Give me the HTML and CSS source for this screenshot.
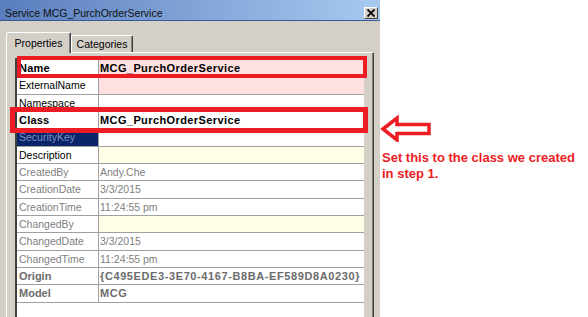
FILE: index.html
```
<!DOCTYPE html>
<html lang="en">
<head>
  <meta charset="UTF-8" />
  <title>Service MCG_PurchOrderService</title>
  <link rel="stylesheet" href="styles.css">
</head>
<body>
  <div class="dialog">
    <div class="titlebar">
      <span class="title">Service MCG_PurchOrderService</span>
      <span class="close-btn">
        <svg width="8" height="8" viewBox="0 0 8 8"><path d="M0.5 0.5 L7.5 7.5 M7.5 0.5 L0.5 7.5" stroke="#000" stroke-width="1.8"/></svg>
      </span>
    </div>
    <div class="tabs">
      <div class="tab active">Properties</div>
      <div class="tab">Categories</div>
    </div>
    <div class="panel">
      <div class="grid">
        <div class="row mark-name">
          <div class="cell label strong">Name</div>
          <div class="cell value strong pink">MCG_PurchOrderService</div>
        </div>
        <div class="row">
          <div class="cell label">ExternalName</div>
          <div class="cell value pink"></div>
        </div>
        <div class="row">
          <div class="cell label">Namespace</div>
          <div class="cell value"></div>
        </div>
        <div class="row mark-class">
          <div class="cell label strong">Class</div>
          <div class="cell value strong">MCG_PurchOrderService</div>
        </div>
        <div class="row">
          <div class="cell label selected">SecurityKey</div>
          <div class="cell value"></div>
        </div>
        <div class="row">
          <div class="cell label">Description</div>
          <div class="cell value yellow"></div>
        </div>
        <div class="row muted">
          <div class="cell label">CreatedBy</div>
          <div class="cell value">Andy.Che</div>
        </div>
        <div class="row muted">
          <div class="cell label">CreationDate</div>
          <div class="cell value">3/3/2015</div>
        </div>
        <div class="row muted">
          <div class="cell label">CreationTime</div>
          <div class="cell value">11:24:55 pm</div>
        </div>
        <div class="row muted">
          <div class="cell label">ChangedBy</div>
          <div class="cell value yellow"></div>
        </div>
        <div class="row muted">
          <div class="cell label">ChangedDate</div>
          <div class="cell value">3/3/2015</div>
        </div>
        <div class="row muted">
          <div class="cell label">ChangedTime</div>
          <div class="cell value">11:24:55 pm</div>
        </div>
        <div class="row system">
          <div class="cell label">Origin</div>
          <div class="cell value wide">{C495EDE3-3E70-4167-B8BA-EF589D8A0230}</div>
        </div>
        <div class="row system">
          <div class="cell label">Model</div>
          <div class="cell value wide">MCG</div>
        </div>
      </div>
    </div>
  </div>
  <div class="note">
    <svg class="note-arrow" width="52" height="28" viewBox="0 0 52 28">
      <path d="M3 15 L17 4 L17 10.5 L49 10.5 L49 19.5 L17 19.5 L17 26 Z" fill="#fff" stroke="#ed1c24" stroke-width="3.5" stroke-linejoin="miter"/>
    </svg>
    <div class="note-text">Set this to the class we created<br>in step 1.</div>
  </div>
</body>
</html>
```
FILE: styles.css
```
:root {
  --face: #d4d0c8;
  --shadow-dark: #404040;
  --shadow: #808080;
  --line: #a0a0a0;
  --pink: #ffe0e0;
  --yellow: #ffffe8;
  --navy: #0a246a;
  --red: #ed1c24;
  --font-ui: "Liberation Sans", Arial, sans-serif;
}
body {
  margin: 0;
  background: #fff;
  font-family: var(--font-ui);
  display: flex;
  height: 317px;
  overflow: hidden;
}
.dialog {
  width: 380px;
  height: 317px;
  background: var(--face);
  display: flex;
  flex-direction: column;
}
.titlebar {
  height: 21px;
  box-sizing: border-box;
  padding: 6px 2px 0 5px;
  border-bottom: 1px solid #3a5a9a;
  background: linear-gradient(to right, #5a7dbd, #a6caf0);
  display: flex;
  align-items: center;
  justify-content: space-between;
}
.title {
  font-size: 10.5px;
  color: #101010;
}
.close-btn {
  width: 14px;
  height: 12px;
  box-sizing: border-box;
  background: var(--face);
  border: 1px solid;
  border-color: #fff var(--shadow-dark) var(--shadow-dark) #fff;
  display: flex;
  align-items: center;
  justify-content: center;
}
.tabs {
  display: flex;
  align-items: flex-end;
  height: 20px;
  margin-top: 11px;
  padding-left: 6px;
}
.tab {
  height: 17px;
  width: 62px;
  box-sizing: border-box;
  border-top: 1px solid #fff;
  border-left: 1px solid #fff;
  border-right: 1px solid var(--shadow-dark);
  box-shadow: inset -1px 0 var(--shadow);
  border-radius: 2px 2px 0 0;
  background: var(--face);
  font-size: 10.5px;
  display: flex;
  align-items: center;
  justify-content: center;
}
.tab.active {
  position: relative;
  z-index: 1;
  width: 65px;
  height: 21px;
  margin-bottom: -1px;
  padding-bottom: 1px;
}
.panel {
  flex: 1;
  width: 368px;
  margin-left: 6px;
  box-sizing: border-box;
  border-top: 1px solid #fff;
  border-left: 1px solid #fff;
  border-right: 1px solid var(--shadow-dark);
  box-shadow: inset -1px 0 var(--shadow);
  padding: 5px 9px 0 8px;
  display: flex;
  flex-direction: column;
}
.grid {
  flex: 1;
  background: #fff;
  border-top: 2px solid var(--shadow-dark);
  border-left: 2px solid var(--shadow-dark);
}
.row {
  position: relative;
  display: grid;
  grid-template-columns: 82px 1fr;
  height: 17.33px;
  box-sizing: border-box;
  border-bottom: 1px solid var(--line);
  font-size: 10.5px;
  color: #000;
}
.cell {
  display: flex;
  align-items: center;
  white-space: nowrap;
  overflow: hidden;
}
.label {
  padding-left: 2px;
  border-right: 1px solid var(--line);
}
.value {
  padding-left: 1px;
}
.strong {
  font-size: 11px;
  font-weight: bold;
  letter-spacing: 0.4px;
}
.label.strong {
  letter-spacing: 0.2px;
}
.pink {
  background: var(--pink);
}
.yellow {
  background: var(--yellow);
}
.selected {
  background: var(--navy);
  color: #8090c0;
}
.muted {
  color: var(--shadow);
}
.system {
  color: #6c6c6c;
  font-size: 11px;
  font-weight: bold;
}
.wide {
  letter-spacing: 0.6px;
}
.mark-name::after,
.mark-class::after {
  content: "";
  position: absolute;
  z-index: 2;
  border: 4px solid var(--red);
  pointer-events: none;
}
.mark-name::after {
  left: 0;
  right: -3px;
  top: -4px;
  bottom: -2px;
}
.mark-class::after {
  border-width: 5px;
  left: -7px;
  right: -4px;
  top: -5px;
  bottom: -5px;
}
.note {
  display: flex;
  flex-direction: column;
  padding-top: 114px;
}
.note-arrow {
  display: block;
}
.note-text {
  margin-top: 8px;
  padding-left: 2px;
  font-size: 13px;
  font-weight: bold;
  line-height: 16px;
  color: var(--red);
  white-space: nowrap;
}
```
